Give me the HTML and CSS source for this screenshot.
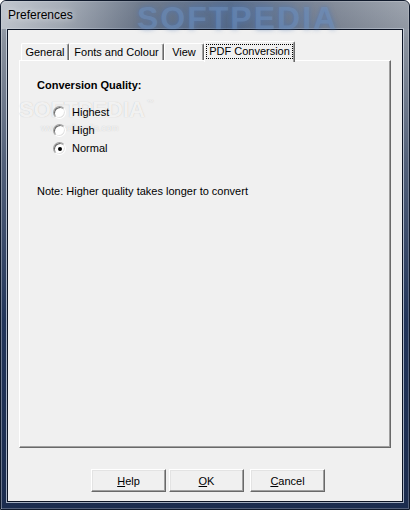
FILE: index.html
```html
<!DOCTYPE html>
<html lang="en">
<head>
  <meta charset="UTF-8" />
  <title>Preferences</title>
  <link rel="stylesheet" href="styles.css">
</head>
<body>
  <div class="window">
    <div class="titlebar">
      <span class="title">Preferences</span>
      <span class="brand">SOFTPEDIA</span>
    </div>

    <div class="client">
      <div class="tabs">
        <div class="tab tab-general">General</div>
        <div class="tab tab-fonts">Fonts and Colour</div>
        <div class="tab tab-view">View</div>
        <div class="tab tab-active"><span class="focus">PDF Conversion</span></div>
      </div>

      <div class="panel">
        <div class="heading">Conversion Quality:</div>
        <div class="options">
          <label class="option"><span class="radio"></span>Highest</label>
          <label class="option"><span class="radio"></span>High</label>
          <label class="option"><span class="radio checked"></span>Normal</label>
        </div>
        <p class="note">Note: Higher quality takes longer to convert</p>

        <!-- watermark over the panel -->
        <div class="watermark">SOFTPEDIA<sup>™</sup><small>www.softpedia.com</small></div>
      </div>

      <div class="buttons">
        <button class="btn"><u>H</u>elp</button>
        <button class="btn"><u>O</u>K</button>
        <button class="btn btn-cancel"><u>C</u>ancel</button>
      </div>
    </div>
  </div>
</body>
</html>
```

FILE: styles.css
```css
body {
  margin: 0;
  background: #fff;
  font-family: 'Liberation Sans', Arial, sans-serif;
  font-size: 11px;
  color: #000;
}
.window {
  width: 410px;
  height: 510px;
  box-sizing: border-box;
  display: flex;
  flex-direction: column;
  border: 1px solid #101a2c;
  border-radius: 6px 6px 0 0;
  background: linear-gradient(to bottom, #a7aeb8 0, #8a929e 40px, #53617a 160px, #22355a 320px, #1b2c4e 100%);
  box-shadow: inset 1px 1px 0 rgba(255,255,255,0.35), inset -1px -1px 0 rgba(255,255,255,0.25);
}
.titlebar {
  height: 28px;
  display: flex;
  align-items: center;
  position: relative;
  padding-left: 7px;
  background: linear-gradient(90deg, rgba(200,205,212,0.8) 0, rgba(170,177,187,0.5) 60px, rgba(60,75,100,0.5) 140px, rgba(40,70,115,0.6) 230px, rgba(80,90,110,0.4) 330px, rgba(140,146,156,0.3) 100%);
  border-radius: 5px 5px 0 0;
}
.title {
  font-size: 12px;
  color: #000;
  text-shadow: 0 0 6px rgba(255,255,255,0.9);
}
.brand {
  position: absolute;
  left: 136px;
  top: -1px;
  font-size: 32px;
  font-weight: bold;
  letter-spacing: 2px;
  color: rgba(120,155,200,0.4);
  text-shadow: 0 0 5px rgba(80,120,180,0.7);
}
.client {
  flex: 1;
  margin: 0 6px 7px;
  background: #f0f0f0;
  border: 1px solid #0c1424;
  box-shadow: 0 0 0 1px rgba(220,228,240,0.7);
  padding: 11px 11px 9px;
  display: flex;
  flex-direction: column;
}
.tabs {
  display: flex;
  align-items: flex-end;
  height: 19px;
  padding-left: 2px;
}
.tab {
  height: 17px;
  box-sizing: border-box;
  padding-top: 2px;
  text-align: center;
  border-top: 1px solid #fff;
  border-left: 1px solid #fff;
  border-right: 1px solid #696969;
  box-shadow: inset -1px 0 0 #a0a0a0;
  border-radius: 2px 2px 0 0;
  white-space: nowrap;
}
.tab-general { width: 48px; }
.tab-fonts { width: 95px; }
.tab-view { width: 40px; }
.tab-active {
  width: 91px;
  height: 21px;
  margin-bottom: -2px;
  padding-top: 2px;
  position: relative;
  z-index: 1;
  background: #f0f0f0;
}
.focus {
  display: inline-block;
  padding: 0 2px;
  border: 1px dotted #000;
  line-height: 13px;
}
.panel {
  height: 388px;
  box-sizing: border-box;
  position: relative;
  border-top: 1px solid #fff;
  border-left: 1px solid #fff;
  border-right: 1px solid #696969;
  border-bottom: 1px solid #696969;
  box-shadow: inset -1px -1px 0 #a0a0a0;
  padding: 17px 17px;
}
.heading {
  font-weight: bold;
  line-height: 14px;
}
.options {
  display: flex;
  flex-direction: column;
  gap: 5px;
  margin-top: 14px;
  padding-left: 16px;
  position: relative;
  z-index: 1;
}
.option {
  display: flex;
  align-items: center;
  gap: 6px;
  line-height: 13px;
}
.radio {
  width: 13px;
  height: 13px;
  box-sizing: border-box;
  border-radius: 50%;
  background: #fff;
  border: 1px solid;
  border-color: #a0a0a0 #fff #fff #a0a0a0;
  box-shadow: inset 1px 1px 0 #696969, inset -1px -1px 0 #e3e3e3;
  position: relative;
}
.radio.checked::after {
  content: "";
  position: absolute;
  left: 3.5px;
  top: 3.5px;
  width: 4px;
  height: 4px;
  border-radius: 50%;
  background: #000;
}
.note {
  margin: 30px 0 0;
}
.watermark {
  position: absolute;
  left: -1px;
  top: 38px;
  line-height: 1;
  font-size: 22px;
  font-weight: bold;
  color: rgba(255,255,255,0.8);
  text-shadow: 0 0 1px rgba(170,170,170,0.7);
  pointer-events: none;
}
.watermark sup {
  font-size: 7px;
  vertical-align: 12px;
  margin-left: 2px;
}
.watermark small {
  position: absolute;
  left: 22px;
  top: 25px;
  font-size: 9px;
  font-weight: normal;
}
.buttons {
  display: flex;
  justify-content: center;
  gap: 3px;
  margin-top: 21px;
  padding-left: 6px;
}
.btn {
  width: 75px;
  height: 23px;
  box-sizing: border-box;
  font-family: inherit;
  font-size: 11px;
  background: #f0f0f0;
  border: 1px solid;
  border-color: #fff #696969 #696969 #fff;
  box-shadow: inset -1px -1px 0 #a0a0a0, inset 1px 1px 0 #e3e3e3;
  padding: 0;
  color: #000;
}
.btn-cancel {
  margin-left: 3px;
}
```
